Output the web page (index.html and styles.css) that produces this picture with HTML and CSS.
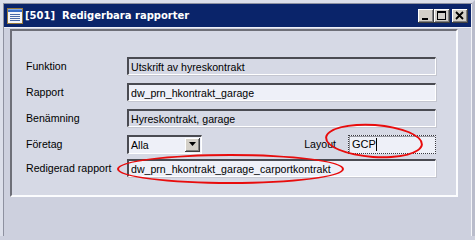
FILE: index.html
```html
<!DOCTYPE html>
<html>
<head>
<meta charset="utf-8">
<link rel="stylesheet" href="styles.css">
</head>
<body>
<div class="window">
  <div class="titlebar">
    <svg class="appicon" width="16" height="16" viewBox="0 0 16 16">
      <rect x="0.5" y="0.5" width="15" height="15" fill="#f4f6fb" stroke="#9a7a3a"/>
      <rect x="1" y="1" width="14" height="3" fill="#3a6ec8"/>
      <rect x="1" y="1" width="14" height="1" fill="#7fa8e8"/>
      <rect x="3" y="6" width="10" height="1" fill="#4a6aa8"/>
      <rect x="3" y="8" width="10" height="1" fill="#4a6aa8"/>
      <rect x="3" y="10" width="10" height="1" fill="#4a6aa8"/>
      <rect x="3" y="12" width="10" height="1" fill="#4a6aa8"/>
    </svg>
    <span class="title">[501]&nbsp; Redigerbara rapporter</span>
    <div class="tbuttons">
      <div class="tbtn">
        <svg width="16" height="14" viewBox="0 0 16 14"><rect x="4" y="9" width="6" height="2" fill="#000"/></svg>
      </div>
      <div class="tbtn gap">
        <svg width="16" height="14" viewBox="0 0 16 14"><rect x="3.5" y="2.5" width="8" height="8" fill="none" stroke="#000"/><rect x="3" y="2" width="9" height="2" fill="#000"/></svg>
      </div>
      <div class="tbtn">
        <svg width="16" height="14" viewBox="0 0 16 14"><path d="M4 3 L11 10 M11 3 L4 10" stroke="#000" stroke-width="1.8"/></svg>
      </div>
    </div>
  </div>
  <div class="client">
    <div class="frame">
      <div class="row">
        <span class="label">Funktion</span>
        <div class="field ro">Utskrift av hyreskontrakt</div>
      </div>
      <div class="row">
        <span class="label">Rapport</span>
        <div class="field">dw_prn_hkontrakt_garage</div>
      </div>
      <div class="row">
        <span class="label">Benämning</span>
        <div class="field ro">Hyreskontrakt, garage</div>
      </div>
      <div class="row tight">
        <span class="label">Företag</span>
        <div class="combo">
          <span class="combo-text">Alla</span>
          <span class="combo-btn">
            <svg width="7" height="4" viewBox="0 0 7 4"><path d="M0 0 H7 L3.5 4 Z" fill="#000"/></svg>
          </span>
        </div>
        <span class="spacer"></span>
        <span class="label-inline">Layout</span>
        <div class="field focus">GCP<span class="caret"></span></div>
      </div>
      <div class="row">
        <span class="label">Redigerad rapport</span>
        <div class="field">dw_prn_hkontrakt_garage_carportkontrakt</div>
      </div>
    </div>
  </div>
  <div class="mark mark-layout"></div>
  <div class="mark mark-report"></div>
</div>
</body>
</html>
```
FILE: styles.css
```css
html, body {
  margin: 0;
  padding: 0;
  background: #cdd0de;
}
body {
  width: 475px;
  height: 236px;
  overflow: hidden;
  font-family: "Liberation Sans", Arial, sans-serif;
  font-size: 10.6px;
  color: #000;
}
.window {
  position: relative;
  box-sizing: border-box;
  width: 475px;
  height: 236px;
  background: #cdd0de;
  border-top: 3px solid #dcdfea;
  border-left: 3px solid #dcdfea;
  border-right: 3px solid #b9bccb;
  box-shadow: inset 1px 1px 0 #8e91a0, inset -1px 0 0 #f3f4f8;
  padding: 1px 1px 0 1px;
}
.titlebar {
  display: flex;
  align-items: center;
  height: 23px;
  background: #0a246a;
  padding: 0 3px 0 3px;
}
.appicon {
  flex: none;
  margin-top: 1px;
}
.title {
  margin-left: 2px;
  font-family: "DejaVu Sans", Verdana, sans-serif;
  font-weight: bold;
  font-size: 10px;
  color: #fff;
  white-space: nowrap;
}
.tbuttons {
  margin-left: auto;
  display: flex;
  margin-top: 1px;
}
.tbtn {
  box-sizing: border-box;
  width: 16px;
  height: 14px;
  background: #d4d0c8;
  box-shadow: inset -1px -1px 0 #404040, inset 1px 1px 0 #fff, inset -2px -2px 0 #808080;
  display: flex;
}
.tbtn svg { display: block; }
.tbtn.gap { margin-right: 2px; }
.client {
  padding: 1px 0 0 6px;
  border-top: 1px solid #eef0f6;
}
.frame {
  box-sizing: border-box;
  width: 448px;
  height: 168px;
  background: #d6d9e5;
  border-top: 2px solid #6e6f78;
  border-left: 2px solid #6e6f78;
  border-right: 2px solid #fbfcfe;
  border-bottom: 2px solid #fbfcfe;
  padding: 26px 20px 0 14px;
}
.row {
  display: flex;
  align-items: center;
  height: 18px;
  margin-bottom: 8px;
}
.row.tight {
  margin-bottom: 6px;
}
.label {
  width: 101px;
  flex: none;
  white-space: nowrap;
}
.field {
  box-sizing: border-box;
  flex: 1;
  height: 18px;
  display: flex;
  align-items: center;
  padding-left: 2px;
  background: #eef0f8;
  border-top: 2px solid #4a4b52;
  border-left: 2px solid #4a4b52;
  border-right: 1px solid #fff;
  border-bottom: 1px solid #fff;
  box-shadow: 1px 1px 0 #c4c6d0;
  white-space: nowrap;
}
.field.ro {
  background: #d6d9e5;
}
.combo {
  box-sizing: border-box;
  width: 75px;
  height: 19px;
  display: flex;
  align-items: center;
  background: #eef0f8;
  border-top: 2px solid #4a4b52;
  border-left: 2px solid #4a4b52;
  border-right: 1px solid #fff;
  border-bottom: 1px solid #fff;
}
.combo-text {
  flex: 1;
  padding-left: 2px;
}
.combo-btn {
  box-sizing: border-box;
  width: 15px;
  height: 14px;
  margin-right: 1px;
  background: #d4d0c8;
  box-shadow: inset -1px -1px 0 #404040, inset 1px 1px 0 #fff, inset -2px -2px 0 #808080;
  display: flex;
  align-items: center;
  justify-content: center;
}
.combo-btn svg { display: block; margin-top: -1px; }
.spacer { flex: 1; }
.label-inline {
  margin-right: 12px;
}
.field.focus {
  flex: none;
  width: 88px;
  height: 19px;
  border: 1px dotted #3a3a40;
  box-shadow: inset 1px 1px 0 #9a9ba4;
  padding-left: 3px;
  font-size: 11px;
}
.caret {
  display: inline-block;
  width: 1px;
  height: 13px;
  background: #000;
  margin-left: 0;
}
.mark {
  position: absolute;
  box-sizing: border-box;
  border: 2px solid #e80c0c;
  border-radius: 50%;
}
.mark-layout {
  left: 322px;
  top: 121px;
  width: 98px;
  height: 34px;
  transform: rotate(4deg);
}
.mark-report {
  left: 114px;
  top: 151px;
  width: 227px;
  height: 30px;
}
```
